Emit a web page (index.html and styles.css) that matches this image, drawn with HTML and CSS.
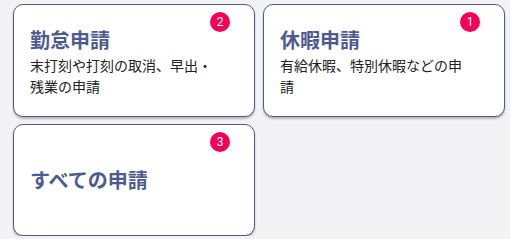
FILE: index.html
```html
<!DOCTYPE html>
<html lang="ja">
<head>
<meta charset="utf-8">
<link rel="stylesheet" href="styles.css">
</head>
<body>
<div class="grid">
  <div class="card">
    <span class="badge">2</span>
    <div class="content">
      <div class="title">勤怠申請</div>
      <div class="desc">末打刻や打刻の取消、早出・残業の申請</div>
    </div>
  </div>
  <div class="card">
    <span class="badge">1</span>
    <div class="content">
      <div class="title">休暇申請</div>
      <div class="desc">有給休暇、特別休暇などの申請</div>
    </div>
  </div>
  <div class="card">
    <span class="badge">3</span>
    <div class="content">
      <div class="title">すべての申請</div>
    </div>
  </div>
</div>
</body>
</html>
```
FILE: styles.css
```css
html, body {
  margin: 0;
  background: #f3f3f6;
}
body {
  padding: 4px 0 0 13px;
  font-family: "Noto Sans CJK JP", "Noto Sans", sans-serif;
}
.grid {
  display: grid;
  grid-template-columns: 242px 242px;
  grid-template-rows: 113px 112px;
  gap: 7px 8px;
}
.card {
  position: relative;
  box-sizing: border-box;
  background: #fff;
  border: 1px solid #4b5a8f;
  border-radius: 10px;
  box-shadow: 0 2px 2px rgba(0, 0, 0, 0.25);
  padding: 0 32px 0 16px;
  display: flex;
  align-items: center;
}
.title {
  color: #4e5b91;
  font-size: 20px;
  font-weight: 700;
  line-height: 30px;
}
.desc {
  color: #222;
  font-size: 14px;
  line-height: 21px;
}
.badge {
  position: absolute;
  top: 7px;
  right: 24px;
  width: 20px;
  height: 20px;
  border-radius: 50%;
  background: #f50057;
  color: #fff;
  font-family: Roboto, sans-serif;
  font-size: 12px;
  line-height: 20px;
  text-align: center;
}
```
